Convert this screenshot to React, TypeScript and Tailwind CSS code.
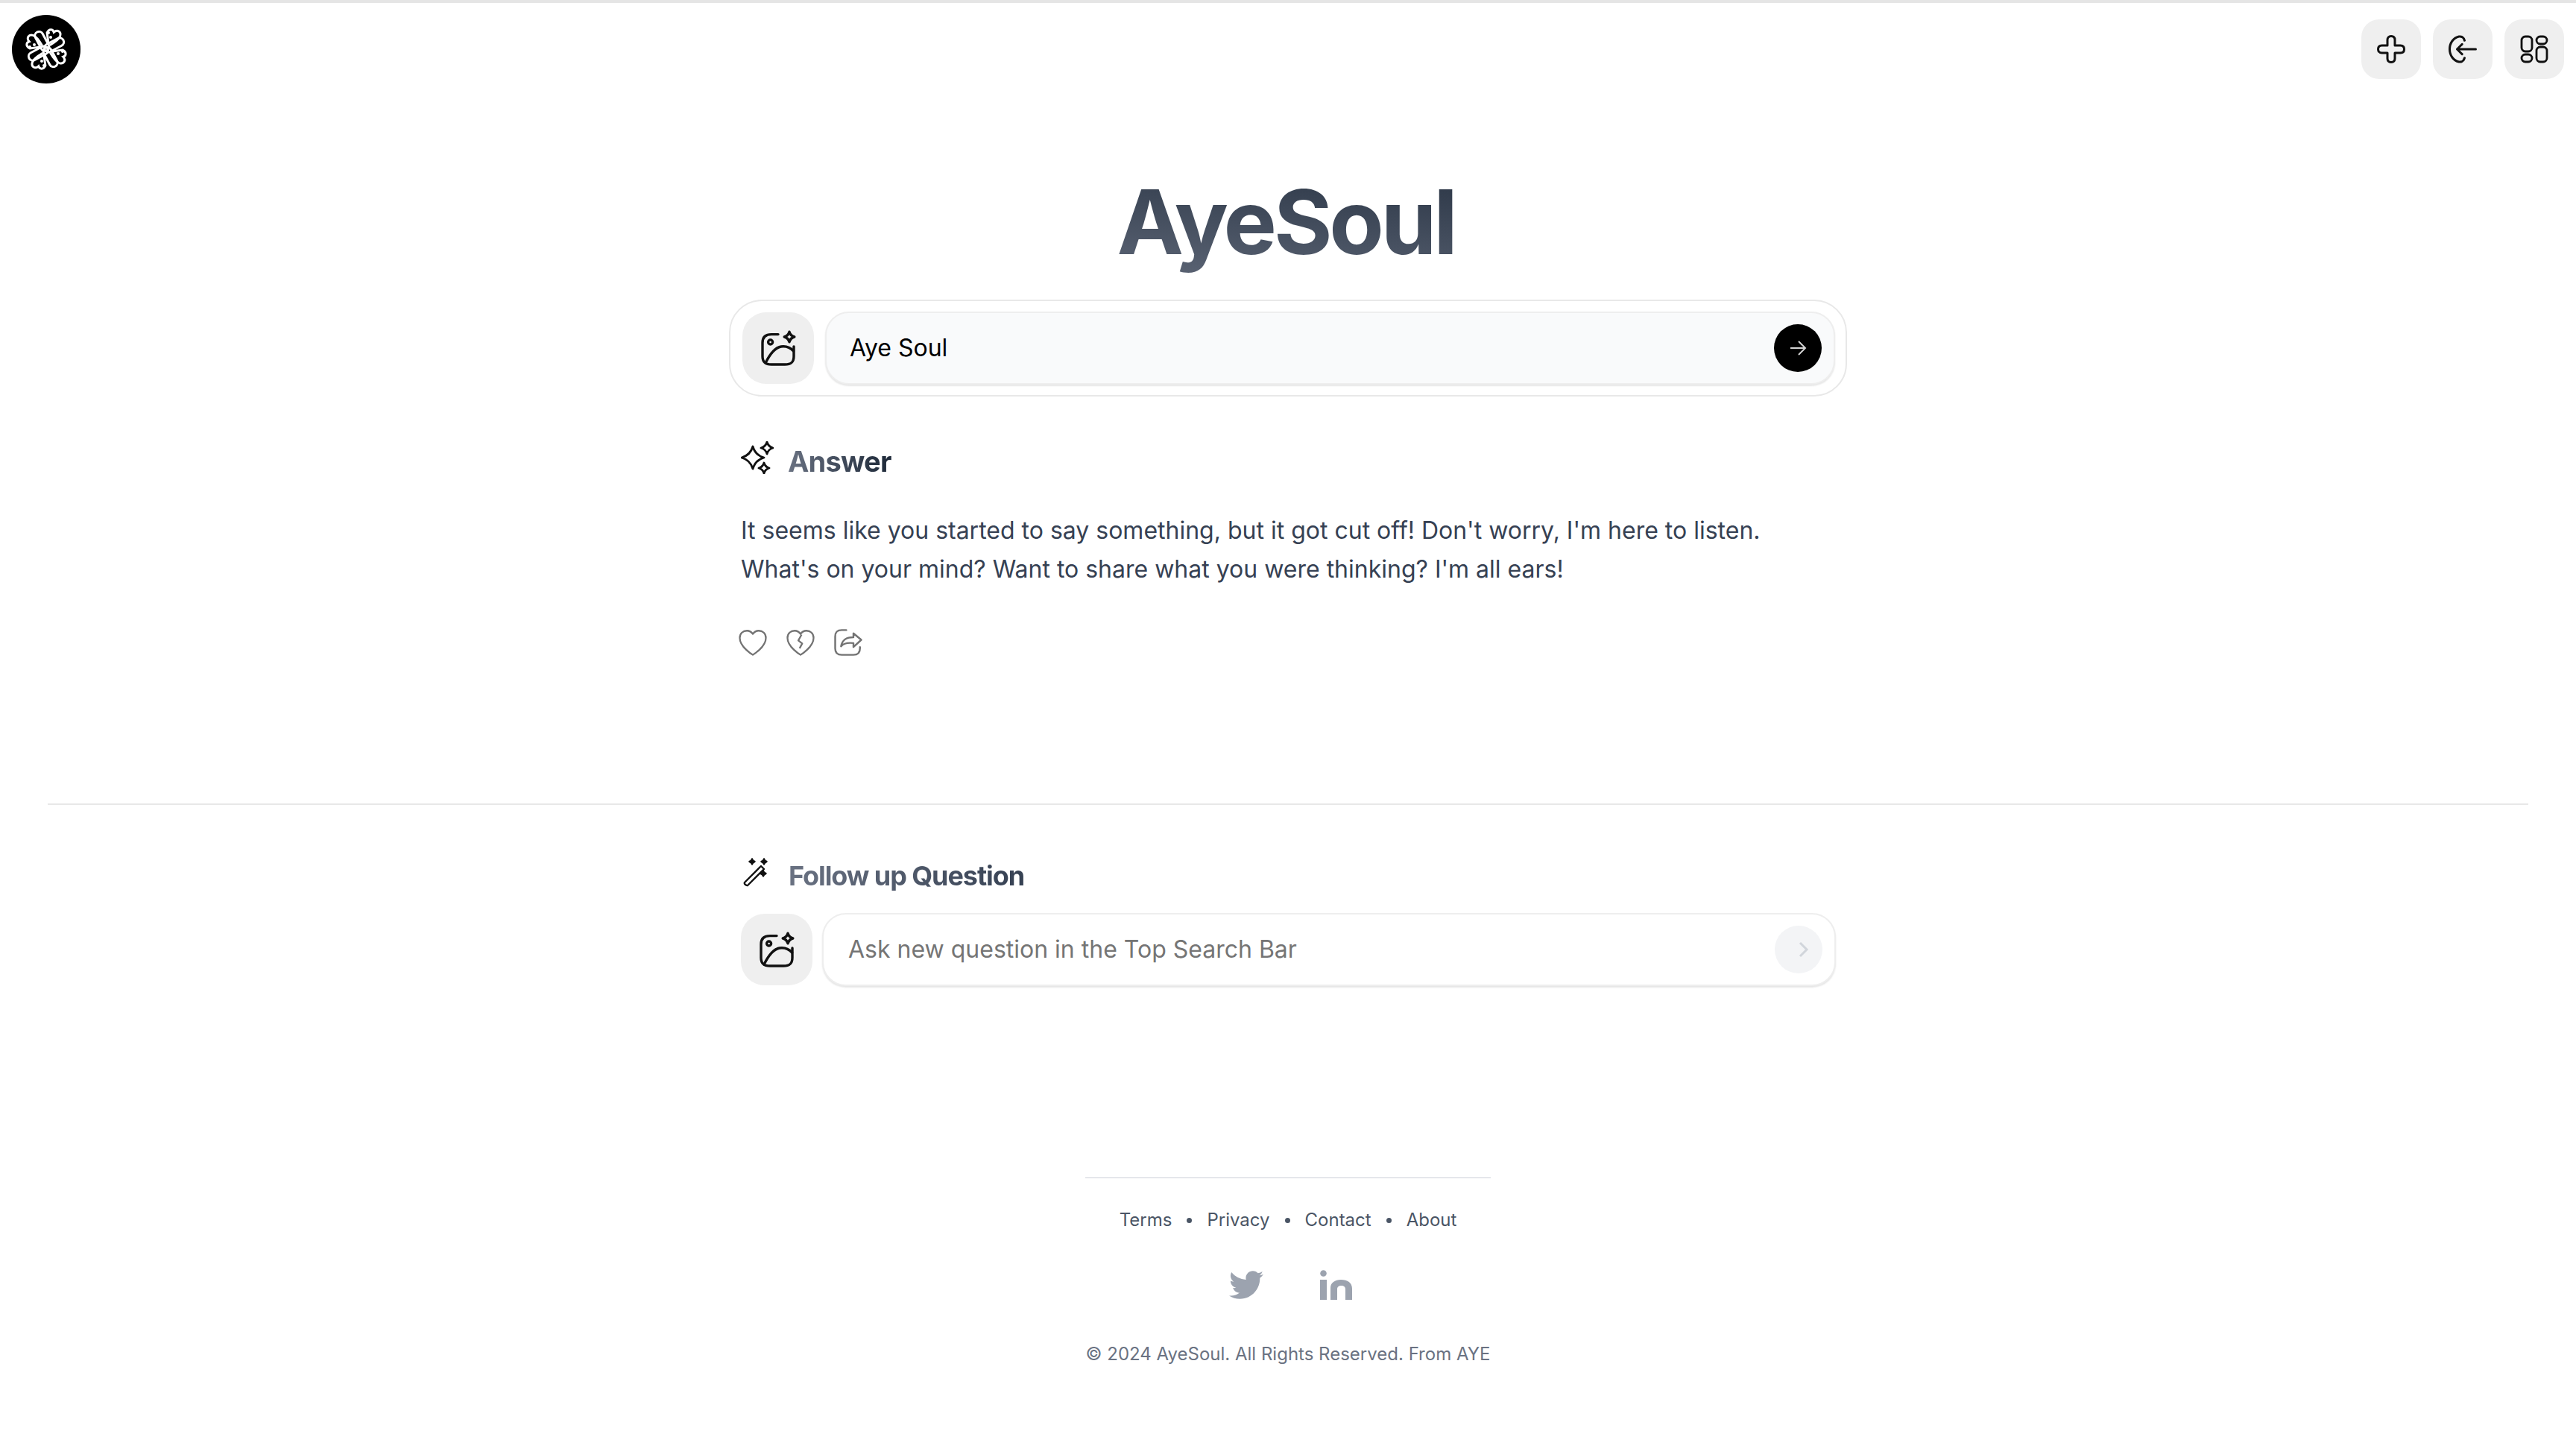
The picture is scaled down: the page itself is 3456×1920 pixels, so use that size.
import { FaTwitter } from "react-icons/fa";

const star = (cx: number, cy: number, r: number) => {
  const k = r * 0.22;
  return `M${cx} ${cy - r}Q${cx + k} ${cy - k} ${cx + r} ${cy}Q${cx + k} ${cy + k} ${cx} ${cy + r}Q${cx - k} ${cy + k} ${cx - r} ${cy}Q${cx - k} ${cy - k} ${cx} ${cy - r}Z`;
};

const heartPath = "M12 21.500C12 21.500 2 15.500 2 8.500C2 5 4.500 3 7.500 3C9.500 3 11 4 12 5.500C13 4 14.500 3 16.500 3C19.500 3 22 5 22 8.500C22 15.500 12 21.500 12 21.500Z";

function Logo() {
  return (
    <div className="w-[92px] h-[92px] rounded-full bg-black flex items-center justify-center">
      <svg width="70" height="70" viewBox="-35 -35 70 70" fill="none" stroke="white" strokeWidth="3">
        {[0, 90, 180, 270].map((r) => (
          <g key={r} transform={`rotate(${r})`}>
            <rect x="-26" y="-5.500" width="28" height="11" rx="5.5" transform="rotate(62)" />
            <path d="M2 -8L-2 -22C0 -28 5 -28 7 -24C11 -29 17 -26 16 -20C15 -15 9 -10 4 -6" transform="rotate(8)" />
            <circle cx="3" cy="-22" r="2" fill="white" stroke="none" />
            <circle cx="6" cy="-16" r="2" fill="white" stroke="none" />
          </g>
        ))}
      </svg>
    </div>
  );
}

function SquareBtn({ children }: { children: React.ReactNode }) {
  return <button className="w-20 h-20 rounded-3xl bg-[#efefef] flex items-center justify-center">{children}</button>;
}

function ImageSpark() {
  return (
    <svg width="48" height="48" viewBox="0 0 24 24" fill="none" stroke="#111" strokeWidth="1.700" strokeLinecap="round" strokeLinejoin="round">
      <path d="M12 2.800H7.500C3.500 2.800 1.500 4.500 1.500 8.500V17.500C1.500 21.500 3.500 23 7.500 23H16.500C20.800 23 22.500 21.500 22.500 17.500V11" />
      <circle cx="6.800" cy="8" r="1.500" />
      <path d="M3.500 22C6 17 9.500 11.700 14 11C17 10.600 20 11.500 22.300 14" />
      <path d={star(19.5, 4.5, 3.4)} />
    </svg>
  );
}

function LinkedinMark() {
  return (
    <svg width="44" height="40" viewBox="0 0 44 40" fill="#9ca3af">
      <circle cx="4.500" cy="4.500" r="4.300" />
      <rect x="0" y="13" width="9" height="27" />
      <path d="M14 40V24C14 17 20 13 28 13C37 13 43 17 43 25V40H34V26C34 22.500 32 21 28.500 21C25 21 23 22.500 23 26V40Z" />
    </svg>
  );
}

export default function App() {
  return (
    <div className="h-[1920px] bg-white border-t-[4px] border-[#e5e5e5] font-['Inter',sans-serif]">
      {/* Header */}
      <div className="flex items-start justify-between pl-4 pr-4 pt-4">
        <Logo />
        <div className="flex gap-4 pt-1.5">
          <SquareBtn>
            <svg width="40" height="40" viewBox="0 0 24 24" fill="none" stroke="#111" strokeWidth="1.800" strokeLinejoin="round">
              <path d="M9 4.500C9 2.500 10.300 1.500 12 1.500C13.700 1.500 15 2.500 15 4.500V9H19.500C21.500 9 22.500 10.300 22.500 12C22.500 13.700 21.500 15 19.500 15H15V19.500C15 21.500 13.700 22.500 12 22.500C10.300 22.500 9 21.500 9 19.500V15H4.500C2.500 15 1.500 13.700 1.500 12C1.500 10.300 2.500 9 4.500 9H9Z" />
            </svg>
          </SquareBtn>
          <SquareBtn>
            <svg width="40" height="40" viewBox="0 0 24 24" fill="none" stroke="#111" strokeWidth="1.800" strokeLinecap="round" strokeLinejoin="round">
              <path d="M13.500 5C13 2.500 11 1.500 9 1.800C4.500 2.800 1.500 7 1.500 12C1.500 17 4.500 21.200 9 22.200C11 22.500 13 21.500 13.500 19" />
              <path d="M22.500 12H7.500M11.500 8L7.500 12L11.500 16" />
            </svg>
          </SquareBtn>
          <SquareBtn>
            <svg width="40" height="40" viewBox="0 0 40 40" fill="none" stroke="#111" strokeWidth="2.800">
              <rect x="3" y="3" width="14" height="20" rx="5" />
              <rect x="23" y="3" width="14" height="10" rx="5" />
              <rect x="23" y="17" width="14" height="20" rx="5" />
              <rect x="3" y="27" width="14" height="10" rx="5" />
            </svg>
          </SquareBtn>
        </div>
      </div>

      <div className="w-[1500px] mx-auto">
        <h1 className="mt-[114px] pr-[6px] text-center text-[120px] leading-[144px] font-bold tracking-[-0.035em] bg-gradient-to-tr from-gray-500 to-gray-800 bg-clip-text text-transparent">
          AyeSoul
        </h1>

        {/* Search box */}
        <div className="mt-[32px] h-[130px] rounded-[44px] border-2 border-[#e8e8e8] flex items-center pl-[16px] pr-[14px] gap-[15px]">
          <div className="w-[96px] h-[96px] rounded-[32px] bg-[#efefef] flex items-center justify-center">
            <ImageSpark />
          </div>
          <div className="flex-1 h-[98px] rounded-[32px] border-2 border-[#eeeeee] bg-[#f9fafb] shadow-[0_2px_2px_rgba(0,0,0,0.1)] flex items-center justify-between pl-[31px] pr-[16px]">
            <span className="text-[32px] text-black">Aye Soul</span>
            <div className="w-16 h-16 rounded-full bg-black flex items-center justify-center">
              <svg width="24" height="24" viewBox="0 0 24 24" fill="none" stroke="#d4d4d4" strokeWidth="2">
                <path d="M2 12H22M13 3L22 12L13 21" />
              </svg>
            </div>
          </div>
        </div>

        {/* Answer */}
        <div className="mt-[65px] px-[16px]">
          <div className="flex items-center gap-[19px] h-[44px]">
            <svg className="mb-[10px]" width="44" height="44" viewBox="0 0 44 44" fill="none" stroke="#111" strokeWidth="2.800" strokeLinejoin="round">
              <path d={star(16, 22, 15)} />
              <path d={star(35, 9, 8)} />
              <path d={star(31, 36, 7)} />
            </svg>
            <h2 className="text-[38px] font-bold tracking-[-0.02em] bg-gradient-to-r from-gray-500 to-gray-800 bg-clip-text text-transparent">
              Answer
            </h2>
          </div>
          <p className="mt-[45px] text-[32px] leading-[52px] text-gray-700">
            It seems like you started to say something, but it got cut off! Don't worry, I'm here to listen.
            <br />
            What's on your mind? Want to share what you were thinking? I'm all ears!
          </p>
          <div className="mt-[51px] flex gap-[22px] text-[#737373] -ml-[5px]">
            <svg width="42" height="42" viewBox="0 0 24 24" fill="none" stroke="currentColor" strokeWidth="1.300" strokeLinejoin="round">
              <path d={heartPath} />
            </svg>
            <svg width="42" height="42" viewBox="0 0 24 24" fill="none" stroke="currentColor" strokeWidth="1.300" strokeLinejoin="round">
              <path d={heartPath} />
              <path d="M12.800 6L10.300 10.500L13.300 12.800L11.300 16.500" />
            </svg>
            <svg width="42" height="42" viewBox="0 0 24 24" fill="none" stroke="currentColor" strokeWidth="1.400" strokeLinecap="round" strokeLinejoin="round">
              <path d="M10.500 2.500H7C3.500 2.500 2 4 2 7.500V16.500C2 20 3.500 21.500 7 21.500H16C19.500 21.500 21 20 21 16.500V15.500" />
              <path d="M16 5V8C11 8 7.500 9.500 6.500 15C8.500 12.500 11.500 12 16 12.500V15.500L22 10L16 5Z" />
            </svg>
          </div>
        </div>
      </div>

      <div className="mt-[195px] mx-16 border-t-2 border-[#e8e8e8]" />

      <div className="w-[1500px] mx-auto pl-[16px] pr-[15px]">
        <div className="mt-[73px] flex items-center gap-[20px] h-[44px]">
          <svg className="mb-[10px]" width="44" height="44" viewBox="0 0 44 44" fill="none" stroke="#111" strokeWidth="2.400" strokeLinejoin="round">
            <path d="M5 39L27 17L31 21L9 43C7 43.500 4 41 5 39Z" transform="translate(0 -3)" />
            <path d={star(15, 8, 3.5)} fill="#111" />
            <path d={star(31, 8, 3.5)} fill="#111" />
            <path d={star(30, 24, 3.5)} fill="#111" />
          </svg>
          <h2 className="text-[36px] font-bold tracking-[-0.03em] bg-gradient-to-r from-gray-500 to-gray-700 bg-clip-text text-transparent">
            Follow up Question
          </h2>
        </div>

        <div className="mt-[28px] flex items-center gap-[13px]">
          <div className="w-[96px] h-[96px] rounded-[32px] bg-[#efefef] flex items-center justify-center">
            <ImageSpark />
          </div>
          <div className="flex-1 h-[98px] rounded-[32px] border-2 border-[#eeeeee] bg-white shadow-[0_2px_2px_rgba(0,0,0,0.1)] flex items-center justify-between pl-[33px] pr-[16px]">
            <span className="text-[32px] text-[#757575]">Ask new question in the Top Search Bar</span>
            <div className="w-16 h-16 rounded-full bg-[#f3f4f6] flex items-center justify-center">
              <svg className="ml-[12px]" width="24" height="24" viewBox="0 0 24 24" fill="none" stroke="#d1d5db" strokeWidth="3">
                <path d="M8 3L17 12L8 21" />
              </svg>
            </div>
          </div>
        </div>
      </div>

      {/* Footer */}
      <div className="mt-[256px] w-[544px] mx-auto border-t-2 border-[#e5e7eb] flex flex-col items-center">
        <div className="mt-[40px] flex items-center gap-[20px] text-[24px] leading-[32px] text-gray-600">
          <span>Terms</span>
          <span className="w-[7px] h-[7px] rounded-full bg-gray-600" />
          <span>Privacy</span>
          <span className="w-[7px] h-[7px] rounded-full bg-gray-600" />
          <span>Contact</span>
          <span className="w-[7px] h-[7px] rounded-full bg-gray-600" />
          <span>About</span>
        </div>
        <div className="mt-[48px] ml-[8px] flex items-center gap-[76px]">
          <FaTwitter size={46} color="#9ca3af" />
          <LinkedinMark />
        </div>
        <p className="mt-[54px] text-[24px] leading-[32px] text-gray-500 whitespace-nowrap">© 2024 AyeSoul. All Rights Reserved. From AYE</p>
      </div>
    </div>
  );
}
